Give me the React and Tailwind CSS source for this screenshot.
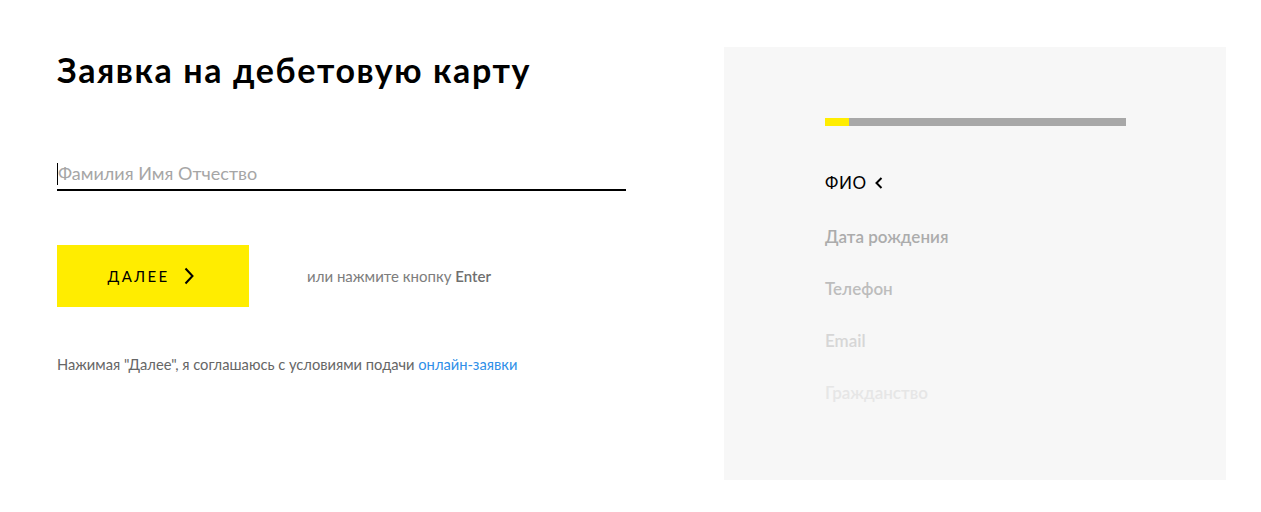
import React from 'react';

const steps = [
  { id: 'dob', label: 'Дата рождения', color: 'text-[#acacac]' },
  { id: 'phone', label: 'Телефон', color: 'text-[#bdbdbd]' },
  { id: 'email', label: 'Email', color: 'text-[#d6d6d6]' },
  { id: 'citizen', label: 'Гражданство', color: 'text-[#e6e6e6]' },
];

export default function App() {
  return (
    <div className="w-[1261px] h-[512px] bg-white flex font-['Lato',sans-serif]">
      {/* Form column */}
      <div className="w-[724px] pl-[57px] pt-[48px] flex flex-col">
        <h1 className="text-[34px] leading-[44px] font-bold text-black tracking-[1.6px]">Заявка на дебетовую карту</h1>

        <div className="mt-[61px] w-[569px] border-b-2 border-black flex items-center h-[38px] pt-[5px]">
          <span className="w-px h-[22px] bg-black" />
          <span className="text-[18px] text-[#a6a6a6]">Фамилия Имя Отчество</span>
        </div>

        <div className="mt-[54px] flex items-center">
          <button type="button" className="w-[192px] h-[62px] bg-[#ffed00] flex items-center justify-center gap-[15px] pr-[4px]">
            <span className="text-[15px] tracking-[2.3px] text-black">ДАЛЕЕ</span>
            <svg width="10" height="18" viewBox="0 0 10 18" fill="none" aria-hidden>
              <path d="M1.5 1.5 L8.5 9 L1.5 16.5" stroke="#000" strokeWidth="2" />
            </svg>
          </button>
          <span className="ml-[58px] text-[15px] text-[#7d7d7d]">
            или нажмите кнопку <span className="font-semibold text-[#6f6f6f]">Enter</span>
          </span>
        </div>

        <p className="mt-[46px] text-[14.7px] text-[#666]">
          Нажимая "Далее", я соглашаюсь с условиями подачи <a className="text-[#2f8fe8]">онлайн-заявки</a>
        </p>
      </div>

      {/* Steps panel */}
      <div className="mt-[47px] w-[502px] h-[433px] bg-[#f7f7f7] pl-[101px] pt-[71px]">
        <div className="w-[301px] h-[8px] bg-[#a8a8a8] flex">
          <div className="w-[24px] h-full bg-[#ffed00]" />
        </div>
        <div className="mt-[45px] flex items-center gap-[8px] h-[24px] text-[17px] tracking-[0.6px] text-black">
          ФИО
          <svg width="8" height="12" viewBox="0 0 8 12" fill="none" aria-hidden>
            <path d="M6.5 1 L1.5 6 L6.5 11" stroke="#000" strokeWidth="2" />
          </svg>
        </div>
        <ul className="mt-[30px] flex flex-col gap-[28px]">
          {steps.map((s) => (
            <li key={s.id} className={`h-[24px] text-[17px] font-semibold leading-[24px] ${s.color}`}>{s.label}</li>
          ))}
        </ul>
      </div>
    </div>
  );
}
